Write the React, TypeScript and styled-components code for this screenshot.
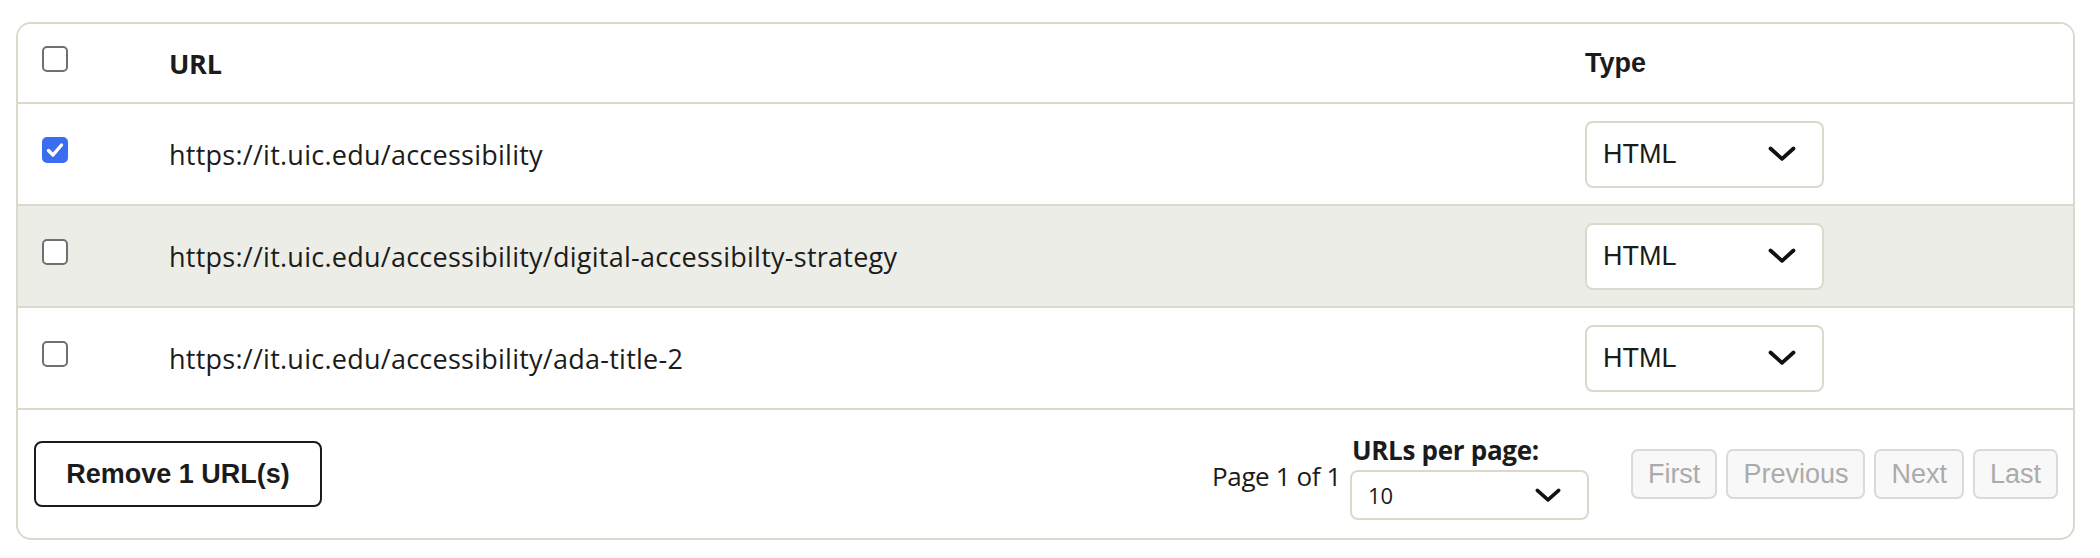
import React, { useState } from "react";
import styled, { createGlobalStyle } from "styled-components";

type UrlRow = {
  url: string;
  type: string;
};

const rows: UrlRow[] = [
  { url: "https://it.uic.edu/accessibility", type: "HTML" },
  { url: "https://it.uic.edu/accessibility/digital-accessibilty-strategy", type: "HTML" },
  { url: "https://it.uic.edu/accessibility/ada-title-2", type: "HTML" },
];

const GlobalStyle = createGlobalStyle`
  html, body {
    margin: 0;
    padding: 0;
    background: #ffffff;
  }
  body {
    font-family: "Open Sans", "Liberation Sans", sans-serif;
    color: #1b1b1b;
  }
`;

const Card = styled.div`
  margin: 22px 25px 0 16px;
  border: 2px solid #dcd9cc;
  border-radius: 15px;
  overflow: hidden;
  background: #fff;
`;

const Row = styled.div<{ $head?: boolean; $shaded?: boolean }>`
  display: grid;
  grid-template-columns: 151px 1416px 1fr;
  align-items: center;
  height: ${(p) => (p.$head ? "78px" : "100px")};
  border-bottom: 2px solid #dcd9cc;
  background: ${(p) => (p.$shaded ? "#edede7" : "#fff")};
`;

const CheckCell = styled.div`
  padding-left: 24px;
  display: flex;
  align-items: center;
  padding-bottom: 8px;
`;

const Box = styled.span<{ $checked: boolean }>`
  width: 26px;
  height: 26px;
  box-sizing: border-box;
  border-radius: 5px;
  border: 2px solid ${(p) => (p.$checked ? "#3a6df0" : "#707070")};
  background: ${(p) => (p.$checked ? "#3a6df0" : "#fff")};
  display: flex;
  align-items: center;
  justify-content: center;
  cursor: pointer;
`;

const HeadText = styled.div<{ $arial?: boolean }>`
  font-family: ${(p) => (p.$arial ? '"Liberation Sans", Arial, sans-serif' : '"Open Sans", sans-serif')};
  font-weight: 700;
  font-size: 27px;
  letter-spacing: ${(p) => (p.$arial ? "0" : "-0.3px")};
`;

const UrlText = styled.div`
  font-family: "Open Sans", sans-serif;
  font-size: 27px;
  font-weight: 400;
  letter-spacing: 0.25px;
  color: #1b1b1b;
`;

const SelectBox = styled.div<{ $w: number; $h: number; $font: "arial" | "sans" }>`
  box-sizing: border-box;
  width: ${(p) => p.$w}px;
  height: ${(p) => p.$h}px;
  border: 2px solid #dcd9cc;
  border-radius: 8px;
  background: #fff;
  display: flex;
  align-items: center;
  justify-content: space-between;
  padding: 0 26px 0 16px;
  font-family: ${(p) =>
    p.$font === "arial" ? '"Liberation Sans", Arial, sans-serif' : '"Open Sans", sans-serif'};
  font-size: ${(p) => (p.$font === "arial" ? "27px" : "22px")};
  color: #1b1b1b;
`;

const Footer = styled.div`
  height: 128px;
  display: flex;
  align-items: center;
  justify-content: space-between;
  padding: 0 15px 0 16px;
`;

const RemoveButton = styled.button`
  box-sizing: border-box;
  width: 288px;
  height: 66px;
  border: 2px solid #1b1b1b;
  border-radius: 8px;
  background: #fff;
  font-family: "Liberation Sans", Arial, sans-serif;
  font-weight: 700;
  font-size: 27px;
  color: #1b1b1b;
  cursor: pointer;
`;

const Pager = styled.div`
  display: flex;
  align-items: center;
`;

const PageInfo = styled.span`
  font-family: "Open Sans", sans-serif;
  font-size: 26px;
  letter-spacing: -0.4px;
  margin-right: 9px;
  margin-top: 4px;
`;

const PerPage = styled.div`
  display: flex;
  flex-direction: column;
  gap: 4px;
  margin-right: 42px;
  margin-top: 6px;
`;

const PerPageLabel = styled.label`
  font-family: "Open Sans", sans-serif;
  font-weight: 700;
  font-size: 26px;
  letter-spacing: -0.3px;
  line-height: 32px;
  padding-left: 2px;
`;

const NavGroup = styled.div`
  display: flex;
  gap: 9px;
`;

const NavButton = styled.button`
  box-sizing: border-box;
  height: 50px;
  padding: 0 15px;
  border: 2px solid #dadada;
  border-radius: 7px;
  background: #f8f8f8;
  color: #ababab;
  font-family: "Liberation Sans", Arial, sans-serif;
  font-size: 27px;
`;

const Check = () => (
  <svg width="20" height="20" viewBox="0 0 20 20">
    <polyline
      points="3.5,10.5 8,15 16.5,5"
      fill="none"
      stroke="#fff"
      strokeWidth="3.4"
      strokeLinecap="round"
      strokeLinejoin="round"
    />
  </svg>
);

const Chevron = ({ w }: { w: number }) => (
  <svg width={w} height={w * 0.55} viewBox="0 0 28 15.4">
    <polyline
      points="2.5,2.5 14,12.8 25.5,2.5"
      fill="none"
      stroke="#111"
      strokeWidth="3.8"
      strokeLinecap="round"
      strokeLinejoin="round"
    />
  </svg>
);

const App = () => {
  const [selected, setSelected] = useState<boolean[]>([true, false, false]);
  const count = selected.filter(Boolean).length;
  const all = count === rows.length;

  const toggle = (i: number) =>
    setSelected((s) => s.map((v, j) => (j === i ? !v : v)));

  return (
    <>
      <GlobalStyle />
      <Card>
        <Row $head>
          <CheckCell>
            <Box
              role="checkbox"
              aria-checked={all}
              $checked={all}
              onClick={() => setSelected(rows.map(() => !all))}
            >
              {all && <Check />}
            </Box>
          </CheckCell>
          <HeadText>URL</HeadText>
          <HeadText $arial>Type</HeadText>
        </Row>
        {rows.map((r, i) => (
          <Row key={r.url} $shaded={i % 2 === 1}>
            <CheckCell>
              <Box
                role="checkbox"
                aria-checked={selected[i]}
                $checked={selected[i]}
                onClick={() => toggle(i)}
              >
                {selected[i] && <Check />}
              </Box>
            </CheckCell>
            <UrlText>{r.url}</UrlText>
            <SelectBox $w={239} $h={67} $font="arial">
              <span>{r.type}</span>
              <Chevron w={28} />
            </SelectBox>
          </Row>
        ))}
        <Footer>
          <RemoveButton>Remove {count} URL(s)</RemoveButton>
          <Pager>
            <PageInfo>Page 1 of 1</PageInfo>
            <PerPage>
              <PerPageLabel>URLs per page:</PerPageLabel>
              <SelectBox $w={239} $h={50} $font="sans">
                <span>10</span>
                <Chevron w={26} />
              </SelectBox>
            </PerPage>
            <NavGroup>
              <NavButton disabled>First</NavButton>
              <NavButton disabled>Previous</NavButton>
              <NavButton disabled>Next</NavButton>
              <NavButton disabled>Last</NavButton>
            </NavGroup>
          </Pager>
        </Footer>
      </Card>
    </>
  );
};

export default App;
